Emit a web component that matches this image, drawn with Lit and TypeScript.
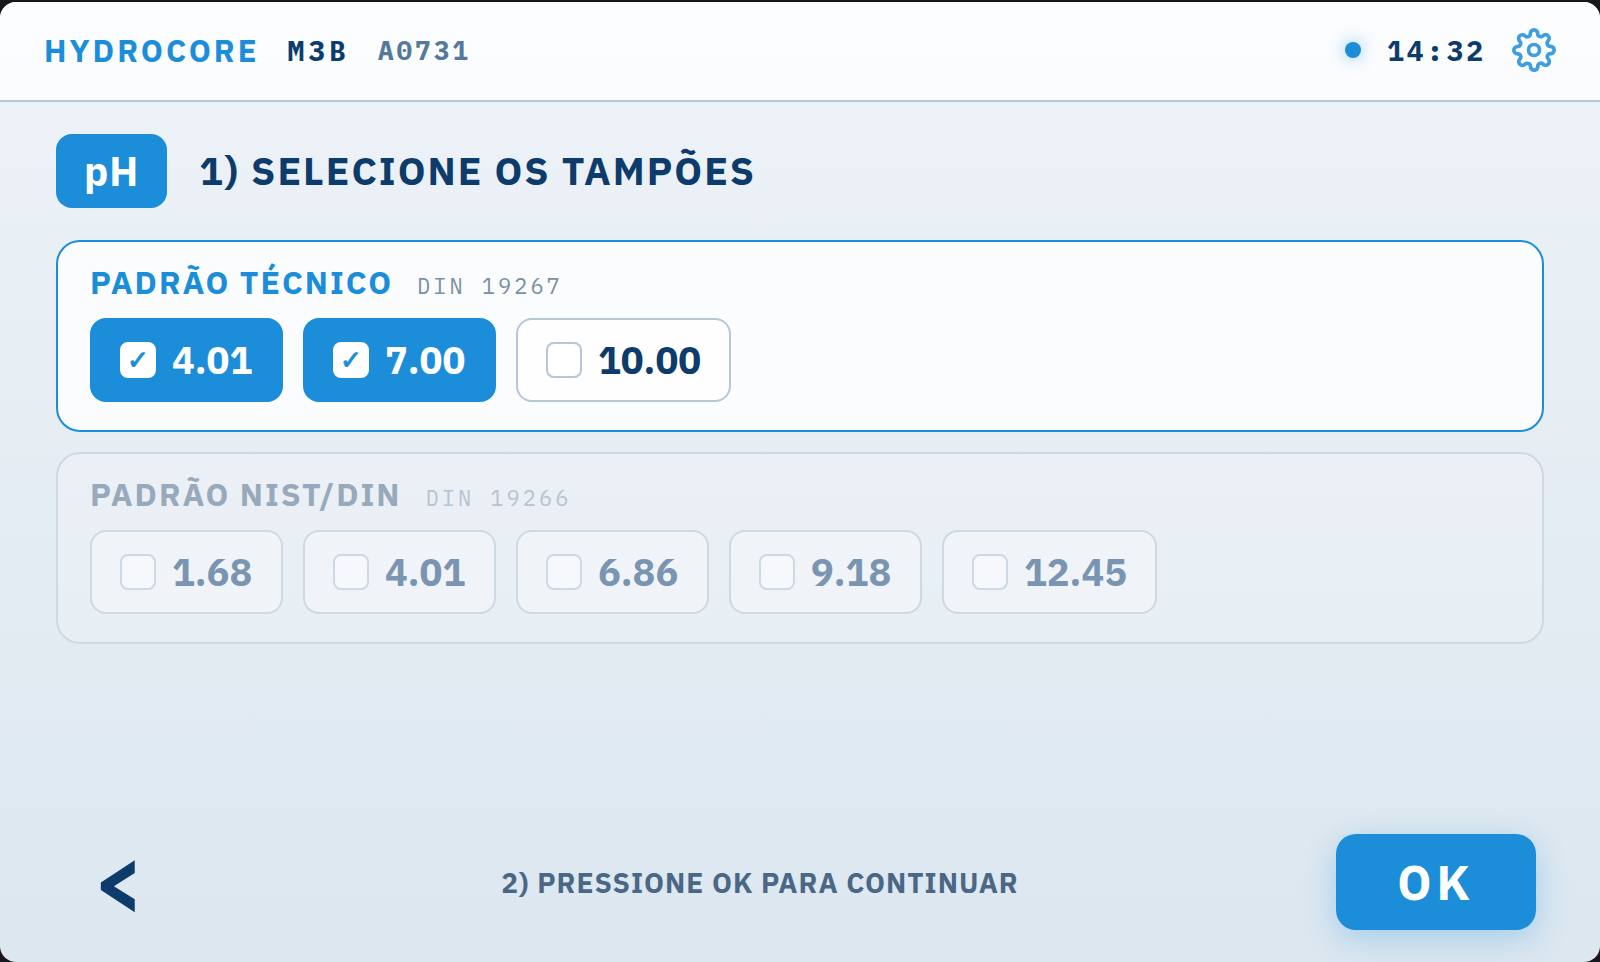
import { LitElement, html, css, svg } from "lit";
import { customElement, property, state } from "lit/decorators.js";
import { classMap } from "lit/directives/class-map.js";

interface BufferGroup {
  id: string;
  name: string;
  norm: string;
  values: string[];
}

const GROUPS: BufferGroup[] = [
  { id: "tec", name: "PADRÃO TÉCNICO", norm: "DIN 19267", values: ["4.01", "7.00", "10.00"] },
  { id: "nist", name: "PADRÃO NIST/DIN", norm: "DIN 19266", values: ["1.68", "4.01", "6.86", "9.18", "12.45"] },
];

const gear = svg`
  <circle cx="12" cy="12" r="3"></circle>
  <path d="M19.4 15a1.65 1.65 0 0 0 .33 1.82l.06.06a2 2 0 0 1 0 2.83 2 2 0 0 1-2.83 0l-.06-.06a1.65 1.65 0 0 0-1.82-.33 1.65 1.65 0 0 0-1 1.51V21a2 2 0 0 1-2 2 2 2 0 0 1-2-2v-.09A1.65 1.65 0 0 0 9 19.4a1.65 1.65 0 0 0-1.82.33l-.06.06a2 2 0 0 1-2.83 0 2 2 0 0 1 0-2.83l.06-.06a1.65 1.65 0 0 0 .33-1.82 1.65 1.65 0 0 0-1.51-1H3a2 2 0 0 1-2-2 2 2 0 0 1 2-2h.09A1.65 1.65 0 0 0 4.6 9a1.65 1.65 0 0 0-.33-1.82l-.06-.06a2 2 0 0 1 0-2.83 2 2 0 0 1 2.83 0l.06.06a1.65 1.65 0 0 0 1.82.33H9a1.65 1.65 0 0 0 1-1.51V3a2 2 0 0 1 2-2 2 2 0 0 1 2 2v.09a1.65 1.65 0 0 0 1 1.51 1.65 1.65 0 0 0 1.82-.33l.06-.06a2 2 0 0 1 2.83 0 2 2 0 0 1 0 2.83l-.06.06a1.65 1.65 0 0 0-.33 1.82V9a1.65 1.65 0 0 0 1.51 1H21a2 2 0 0 1 2 2 2 2 0 0 1-2 2h-.09a1.65 1.65 0 0 0-1.51 1z"></path>`;

@customElement("device-header")
export class DeviceHeader extends LitElement {
  static styles = css`
    :host { display: block; }
    .bar {
      display: flex;
      align-items: center;
      justify-content: space-between;
      height: 96px;
      padding: 0 44px 2px;
      background: rgba(253, 254, 255, 0.85);
      border-bottom: 2px solid #b8c7d6;
    }
    .identity { display: flex; align-items: center; gap: 28px; }
    .tools { display: flex; align-items: center; gap: 26px; }
    .brand { font-size: 31px; font-weight: 700; letter-spacing: 3px; color: #1b8dd9; }
    .mono { font-family: "IBM Plex Mono", "Liberation Mono", monospace; font-weight: 700; }
    .model { font-size: 28px; letter-spacing: 4px; color: #0d3b6b; }
    .serial { font-size: 26px; letter-spacing: 3px; color: #55789b; }
    .status {
      width: 16px;
      height: 16px;
      border-radius: 50%;
      background: #1b8dd9;
      box-shadow: 0 0 16px rgba(27, 141, 217, 0.5);
    }
    .clock { font-size: 28px; letter-spacing: 3px; color: #0d3b6b; }
    .settings { display: flex; padding: 0; border: 0; background: none; cursor: pointer; }
    .icon {
      width: 44px;
      height: 44px;
      overflow: visible;
      fill: none;
      stroke: #3e9ee0;
      stroke-width: 2;
      stroke-linecap: round;
      stroke-linejoin: round;
    }
  `;

  render() {
    return html`
      <header class="bar">
        <div class="identity">
          <span class="brand">HYDROCORE</span>
          <span class="mono model">M3B</span>
          <span class="mono serial">A0731</span>
        </div>
        <div class="tools">
          <span class="status"></span>
          <time class="mono clock">14:32</time>
          <button class="settings" aria-label="Configurações">
            <svg class="icon" viewBox="0 0 24 24" aria-hidden="true">${gear}</svg>
          </button>
        </div>
      </header>
    `;
  }
}

@customElement("buffer-group")
export class BufferGroupCard extends LitElement {
  static styles = css`
    :host { display: block; }
    .card {
      margin: 0;
      padding: 20px 32px 28px;
      border: 2px solid #cdd9e3;
      border-radius: 24px;
      background: rgba(255, 255, 255, 0.2);
    }
    .card.active { border-color: #1b8dd9; background: rgba(254, 254, 255, 0.85); }
    .heading { display: flex; align-items: baseline; gap: 24px; margin-bottom: 12px; line-height: 40px; }
    .name { margin: 0; font-size: 32px; font-weight: 700; letter-spacing: 2px; color: #98a9bb; }
    .norm {
      font-family: "IBM Plex Mono", "Liberation Mono", monospace;
      font-size: 22px;
      letter-spacing: 3px;
      color: #b8c4cf;
    }
    .active .name { color: #1b8dd9; }
    .active .norm { color: #7a90a5; }
    .options { display: flex; flex-wrap: wrap; gap: 20px; }
    .option {
      box-sizing: border-box;
      display: flex;
      align-items: center;
      gap: 16px;
      min-width: 193px;
      height: 84px;
      padding: 0 28px;
      border: 2px solid #cdd9e3;
      border-radius: 16px;
      background: rgba(255, 255, 255, 0.35);
      color: #7a95b1;
      font-size: 38px;
      font-weight: 700;
      line-height: 48px;
      cursor: pointer;
    }
    .active .option { border-color: #b8c7d6; background: #fefefe; color: #0d3b6b; }
    .active .option.picked { border-color: #1b8dd9; background: #1b8dd9; color: #fff; }
    .tick {
      appearance: none;
      display: grid;
      place-items: center;
      width: 36px;
      height: 36px;
      margin: 0;
      border: 2px solid #cdd9e3;
      border-radius: 8px;
      background: rgba(255, 255, 255, 0.4);
      color: #1b8dd9;
      cursor: pointer;
    }
    .active .tick { border-color: #b8c7d6; background: #fff; }
    .active .tick:checked { border-color: #fff; }
    .tick:checked::before {
      content: "✓";
      font: 700 26px/32px "DejaVu Sans", sans-serif;
      -webkit-text-stroke: 1px #1b8dd9;
    }
  `;

  @property({ attribute: false }) group!: BufferGroup;
  @property({ attribute: false }) picked: string[] = [];
  @property({ type: Boolean }) active = false;

  private toggle(value: string) {
    this.dispatchEvent(new CustomEvent("buffer-toggle", { detail: { group: this.group.id, value } }));
  }

  render() {
    return html`
      <section class=${classMap({ card: true, active: this.active })}>
        <div class="heading">
          <h2 class="name">${this.group.name}</h2>
          <span class="norm">${this.group.norm}</span>
        </div>
        <div class="options">
          ${this.group.values.map((value) => {
            const on = this.active && this.picked.includes(value);
            return html`
              <label class=${classMap({ option: true, picked: on })}>
                <input class="tick" type="checkbox" .checked=${on} @change=${() => this.toggle(value)} />
                <span>${value}</span>
              </label>
            `;
          })}
        </div>
      </section>
    `;
  }
}

@customElement("app-root")
export class AppRoot extends LitElement {
  static styles = css`
    :host {
      display: block;
      box-sizing: border-box;
      min-height: 100vh;
      padding-top: 2px;
      background: #18171c;
      font-family: "IBM Plex Sans", "Noto Sans", sans-serif;
    }
    .screen {
      display: flex;
      flex-direction: column;
      min-height: calc(100vh - 2px);
      border-radius: 16px;
      overflow: hidden;
      background: linear-gradient(180deg, #eef3f7 0%, #dce7f0 100%);
    }
    .content { display: flex; flex-direction: column; gap: 20px; padding: 32px 56px; }
    .titlebar { display: flex; align-items: center; gap: 32px; margin-bottom: 12px; }
    .badge {
      padding: 0 28px;
      border-radius: 16px;
      background: #1b8dd9;
      color: #fff;
      font-size: 40px;
      font-weight: 700;
      line-height: 74px;
      letter-spacing: 1px;
    }
    .title { margin: 0; font-size: 39px; font-weight: 700; line-height: 52px; letter-spacing: 2px; color: #0d3b6b; }
    .footer {
      display: flex;
      align-items: center;
      justify-content: space-between;
      margin-top: auto;
      padding: 0 64px 32px;
    }
    .back {
      width: 120px;
      height: 96px;
      padding: 0 0 4px 28px;
      border: 0;
      background: none;
      color: #0d3b6b;
      font: 700 86px/92px "IBM Plex Sans", Roboto, sans-serif;
      text-align: left;
      cursor: pointer;
    }
    .hint { margin: 0; font-size: 28px; font-weight: 700; letter-spacing: 1px; color: #4a6786; }
    .ok {
      width: 200px;
      height: 96px;
      padding: 0;
      border: 0;
      border-radius: 20px;
      background: #1b8dd9;
      box-shadow: 0 8px 32px rgba(27, 141, 217, 0.3);
      color: #fff;
      font-family: inherit;
      font-size: 48px;
      font-weight: 700;
      letter-spacing: 5px;
      cursor: pointer;
    }
  `;

  @state() private activeGroup = "tec";
  @state() private picked: string[] = ["4.01", "7.00"];

  private onToggle(e: CustomEvent<{ group: string; value: string }>) {
    const { group, value } = e.detail;
    if (group !== this.activeGroup) {
      this.activeGroup = group;
      this.picked = [value];
    } else {
      this.picked = this.picked.includes(value)
        ? this.picked.filter((v) => v !== value)
        : [...this.picked, value];
    }
  }

  render() {
    return html`
      <div class="screen">
        <device-header></device-header>
        <main class="content">
          <div class="titlebar">
            <span class="badge">pH</span>
            <h1 class="title">1) SELECIONE OS TAMPÕES</h1>
          </div>
          ${GROUPS.map(
            (g) => html`
              <buffer-group
                .group=${g}
                .picked=${this.picked}
                .active=${g.id === this.activeGroup}
                @buffer-toggle=${this.onToggle}
              ></buffer-group>
            `
          )}
        </main>
        <footer class="footer">
          <button class="back" aria-label="Voltar">&lt;</button>
          <p class="hint">2) PRESSIONE OK PARA CONTINUAR</p>
          <button class="ok">OK</button>
        </footer>
      </div>
    `;
  }
}
